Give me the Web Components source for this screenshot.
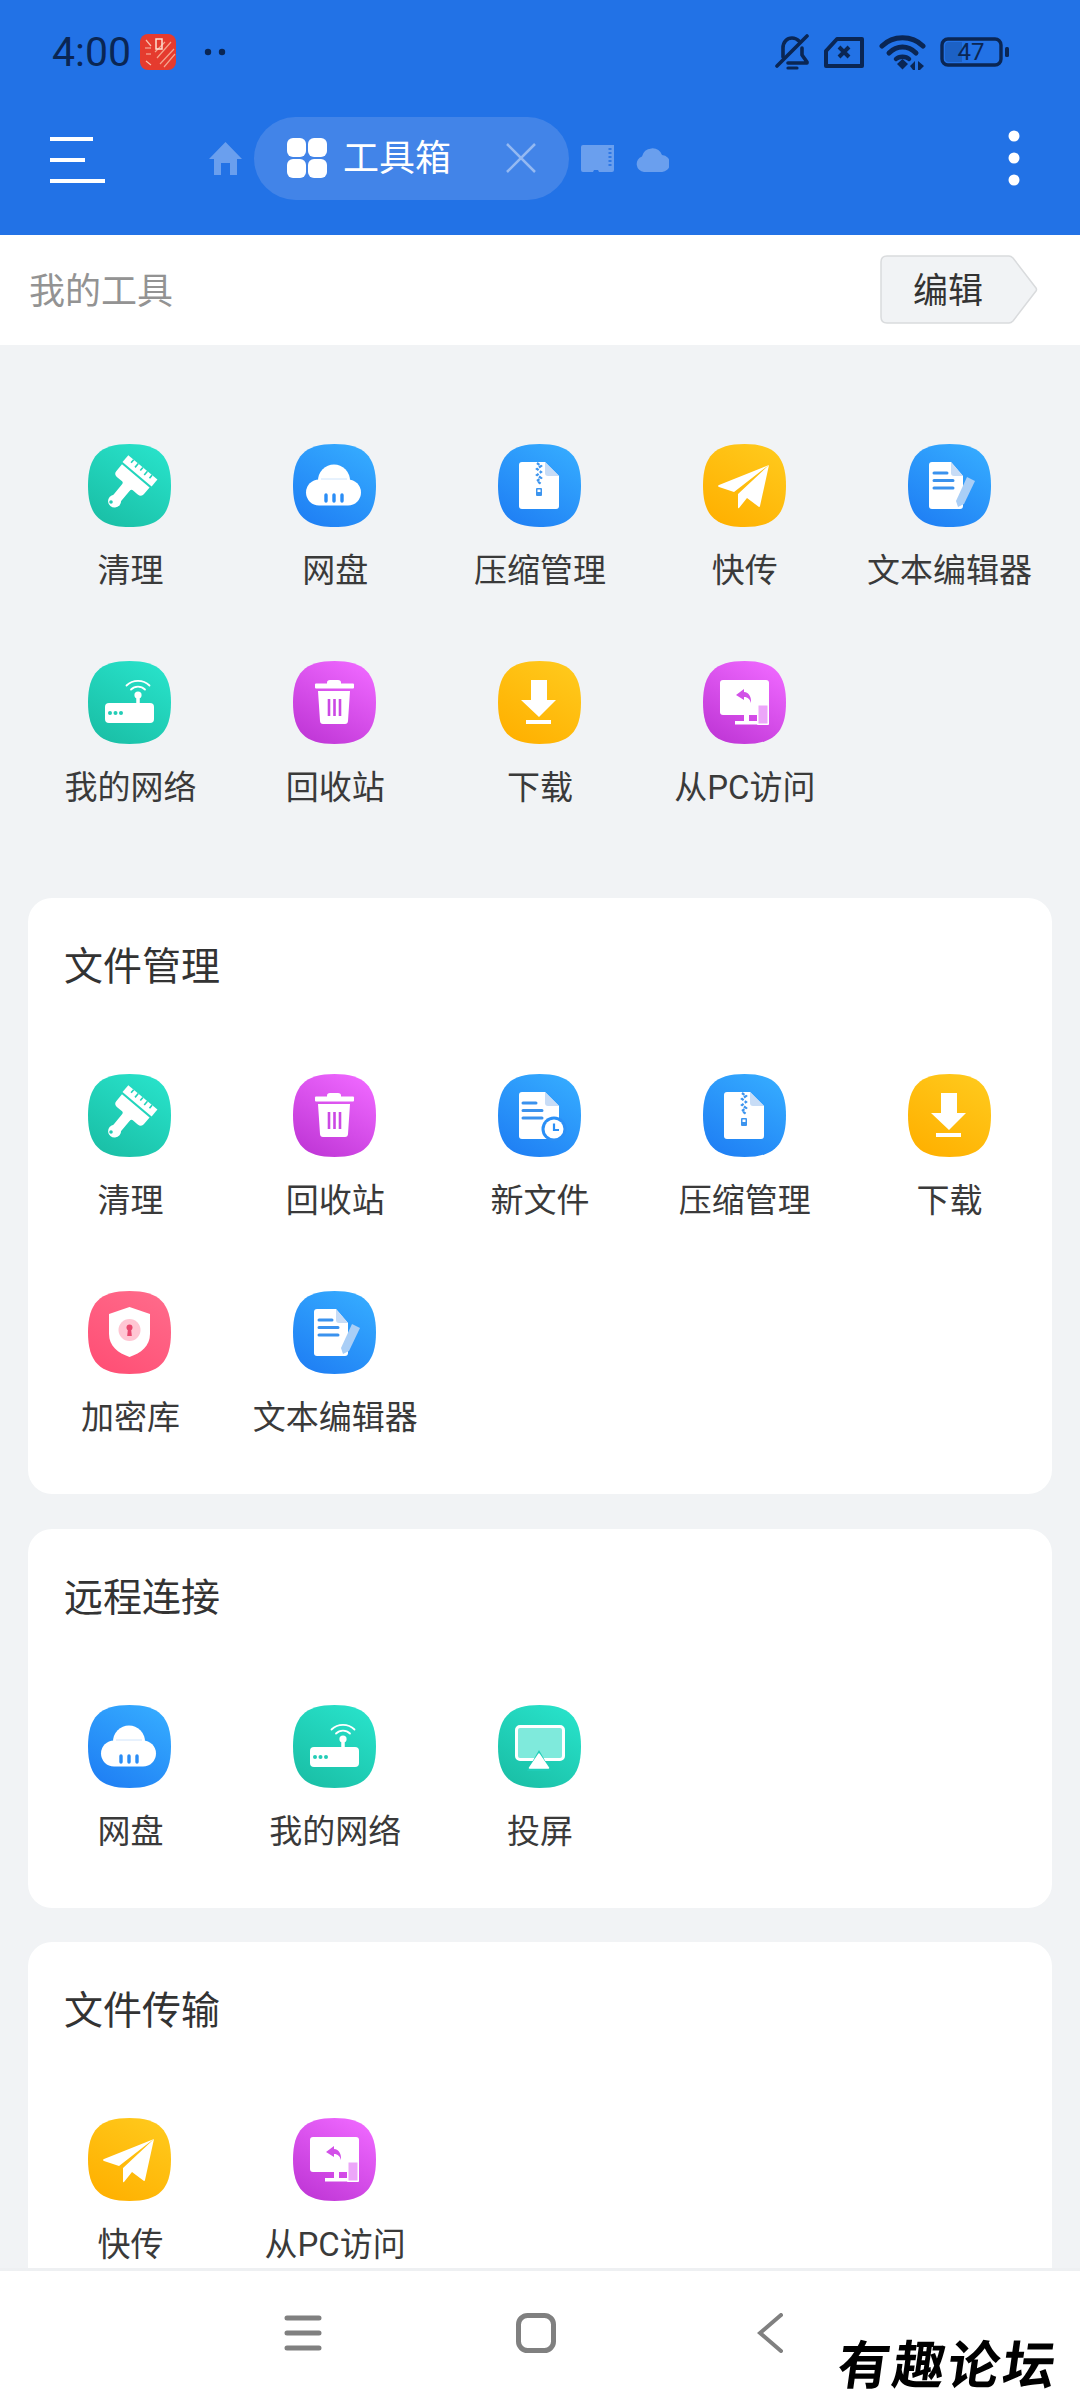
<!DOCTYPE html>
<html lang="zh">
<head>
<meta charset="utf-8">
<title>工具箱</title>
<style>
    html, body {
        margin: 0;
        background: #f1f3f5;
        font-family: Roboto, "Noto Sans CJK SC", sans-serif;
    }
    #app {
        display: flex;
        flex-direction: column;
        width: 1080px;
        height: 2400px;
        overflow: hidden;
    }
</style>
</head>
<body>
<div id="app">
    <app-header></app-header>
    <edit-bar>我的工具</edit-bar>
    <tool-page>
        <tool-grid class="top">
            <tool-item icon="brush">清理</tool-item>
            <tool-item icon="cloud">网盘</tool-item>
            <tool-item icon="zip">压缩管理</tool-item>
            <tool-item icon="plane">快传</tool-item>
            <tool-item icon="text">文本编辑器</tool-item>
            <tool-item icon="router">我的网络</tool-item>
            <tool-item icon="trash">回收站</tool-item>
            <tool-item icon="down">下载</tool-item>
            <tool-item icon="pc">从PC访问</tool-item>
        </tool-grid>
        <tool-card heading="文件管理">
            <tool-item icon="brush">清理</tool-item>
            <tool-item icon="trash">回收站</tool-item>
            <tool-item icon="recent">新文件</tool-item>
            <tool-item icon="zip">压缩管理</tool-item>
            <tool-item icon="down">下载</tool-item>
            <tool-item icon="vault">加密库</tool-item>
            <tool-item icon="text">文本编辑器</tool-item>
        </tool-card>
        <tool-card heading="远程连接" style="margin-top: 1px">
            <tool-item icon="cloud">网盘</tool-item>
            <tool-item icon="router">我的网络</tool-item>
            <tool-item icon="cast">投屏</tool-item>
        </tool-card>
        <tool-card heading="文件传输">
            <tool-item icon="plane">快传</tool-item>
            <tool-item icon="pc">从PC访问</tool-item>
        </tool-card>
    </tool-page>
    <nav-bar></nav-bar>
</div>

<script>
const COLORS = {
    teal: ['#1abfa6', '#28e2ca'],
    blue: ['#1f7ff4', '#35abff'],
    yellow: ['#ffb000', '#ffc91c'],
    purple: ['#bf36d6', '#ef68ff'],
    pink: ['#ff4f75', '#ff6a8a']
};

const paper = `<path d="M24 18H47L61 32V62a3 3 0 0 1-3 3H24a3 3 0 0 1-3-3V21a3 3 0 0 1 3-3Z" fill="#fff"/>
    <path d="M47 18L61 32H50a3 3 0 0 1-3-3Z" fill="#c7dcf6"/>`;

const ICONS = {
    brush: { color: 'teal', art: `
        <g transform="translate(51 28) rotate(40)" fill="#fff">
            <path d="M-19-6H19V3H-19Z"/>
            <path d="M-18 5H18V14Q18 18 13 18H7Q5 18 5 21V37H-5V21Q-5 18-7 18H-13Q-18 18-18 14Z"/>
            <circle cy="38" r="6.5"/>
            <path d="M-12-6V-2M-6-6V-1M0-6V-2M6-6V-1M12-6V-2" stroke="#22d2ba" stroke-width="1.6"/>
        </g>
        <circle cx="23" cy="58" r="1.8" fill="#22cbb3"/>` },
    cloud: { color: 'blue', art: `
        <ellipse cx="41" cy="37" rx="16" ry="16.500" fill="#fff"/>
        <rect x="13" y="35.500" width="55" height="26" rx="13" fill="#fff"/>
        <path d="M28 35H54" stroke="#cfe4fb" stroke-width="1"/>
        <path d="M33 51v6M41 51v6M49 51v6" stroke="#2a8df6" stroke-width="3.400" stroke-linecap="round"/>` },
    zip: { color: 'blue', art: `${paper}
        <path d="M39 19l4 3-4 3 4 3-4 3 4 3-4 3 4 3" fill="none" stroke="#3c94ee" stroke-width="2.200" stroke-dasharray="3 1.500"/>
        <rect x="38" y="44" width="6" height="8" rx="1" fill="#3c94ee"/>
        <rect x="39.500" y="45.500" width="3" height="2.500" fill="#fff"/>` },
    plane: { color: 'yellow', art: `
        <path d="M66 21L16 41Q14 42 16 43L31 48L58 27Z" fill="#fff"/>
        <path d="M66 21L35 50V63Q35 65 36 64L44 54L56 63Q57 63 57 62Z" fill="#fff"/>` },
    text: { color: 'blue', art: `
        <path d="M24 18H43L55 32V62a3 3 0 0 1-3 3H24a3 3 0 0 1-3-3V21a3 3 0 0 1 3-3Z" fill="#fff"/>
        <path d="M43 18L55 32H46a3 3 0 0 1-3-3Z" fill="#c7dcf6"/>
        <path d="M26 29H39M26 36.500H45M26 44H45" stroke="#3a92ee" stroke-width="3" stroke-linecap="round"/>
        <path d="M59 33L67 37L56 60L50 63L48 57Z" fill="#a9cef6"/>` },
    recent: { color: 'blue', art: `${paper}
        <path d="M25 29H38M25 36.500H44M25 44H44" stroke="#3a92ee" stroke-width="3" stroke-linecap="round"/>
        <circle cx="56" cy="55" r="12.500" fill="#2a8ff6"/>
        <circle cx="56" cy="55" r="9.500" fill="#fff"/>
        <path d="M56 49.500V56H61" fill="none" stroke="#2a8ff6" stroke-width="2.200"/>` },
    router: { color: 'teal', art: `
        <rect x="17" y="42" width="49" height="20" rx="4" fill="#fff"/>
        <path d="M50 43V35" stroke="#fff" stroke-width="3.500"/>
        <circle cx="50" cy="34" r="3.600" fill="#fff"/>
        <path d="M43 28.500A10 10 0 0 1 57 28.500M38.500 24.500A16.500 16.500 0 0 1 61.500 24.500" fill="none" stroke="#fff" stroke-width="1.800" stroke-linecap="round"/>
        <g fill="#22cdb6"><circle cx="22" cy="52" r="2"/><circle cx="27.500" cy="52" r="2"/><circle cx="33" cy="52" r="2"/></g>` },
    trash: { color: 'purple', art: `
        <path d="M34 24V21.500Q34 19 37 19H45Q48 19 48 21.500V24Z" fill="#fff"/>
        <rect x="22" y="22.500" width="39" height="5" rx="1" fill="#fff"/>
        <path d="M25 30H57L55 60Q54.800 63 52 63H30Q27.200 63 27 60Z" fill="#fff"/>
        <path d="M36 38V55M41.500 38V55M47 38V55" stroke="#cb48e4" stroke-width="2.600"/>` },
    down: { color: 'yellow', art: `
        <path d="M33 19H49V39H58L41 56L23 39H33Z" fill="#fff"/>
        <rect x="28" y="59" width="25" height="4" fill="#fff"/>` },
    pc: { color: 'purple', art: `
        <rect x="17" y="19" width="49" height="35" rx="3" fill="#fff"/>
        <rect x="41" y="52" width="5" height="9" fill="#fff"/>
        <rect x="32" y="60" width="23" height="3.500" fill="#fff"/>
        <path d="M41 28L33 34L41 39V36C45 36 47 38.500 48 42C48.500 36 46 31.500 41 31Z" fill="#d250e8"/>
        <rect x="54" y="43" width="12" height="21" rx="1" fill="#fff"/>
        <rect x="55.500" y="44.500" width="9" height="18" fill="#eca6f9"/>` },
    vault: { color: 'pink', art: `
        <path d="M41.500 16L62 23V43C62 55 53 62 41.500 66C30 62 21 55 21 43V23Z" fill="#fff"/>
        <circle cx="41.500" cy="39" r="11" fill="#ffc6d3"/>
        <circle cx="41.500" cy="36.500" r="3" fill="#e8476d"/>
        <path d="M40 37H43L43.800 45H39.200Z" fill="#e8476d"/>` },
    cast: { color: 'teal', art: `
        <rect x="18.500" y="21.500" width="47" height="33" rx="3.500" fill="#7feadc" stroke="#fff" stroke-width="3"/>
        <path d="M41 45L53 66H29Z" fill="#20cdb8"/>
        <path d="M41 49L50.500 63H31.500Z" fill="#fff" stroke="#fff" stroke-width="1.500" stroke-linejoin="round"/>` }
};

class ToolIcon extends HTMLElement {
    connectedCallback() {
        const icon = ICONS[this.getAttribute('name')];
        const [from, to] = COLORS[icon.color];
        this.attachShadow({ mode: 'open' });
        this.shadowRoot.innerHTML = `
            <style>
                :host { display: block; width: 83px; height: 83px; margin-left: -1px; }
                svg { display: block; }
            </style>
            <svg width="83" height="83" viewBox="0 0 83 83">
                <defs>
                    <linearGradient id="bg" x1="0.2" y1="1" x2="0.8" y2="0">
                        <stop offset="0" stop-color="${from}"/>
                        <stop offset="1" stop-color="${to}"/>
                    </linearGradient>
                </defs>
                <path d="M41.500 0C71 0 83 12 83 41.500C83 71 71 83 41.500 83C12 83 0 71 0 41.500C0 12 12 0 41.500 0Z" fill="url(#bg)"/>
                ${icon.art}
            </svg>
        `;
    }
}

class ToolItem extends HTMLElement {
    connectedCallback() {
        this.attachShadow({ mode: 'open' });
        this.shadowRoot.innerHTML = `
            <style>
                :host {
                    display: flex;
                    flex-direction: column;
                    align-items: center;
                    padding-top: 24px;
                    box-sizing: border-box;
                    height: 217px;
                    color: #3a3a3a;
                    font-size: 33px;
                }
                .label {
                    margin-top: 22px;
                    line-height: 44px;
                    white-space: nowrap;
                }
            </style>
            <tool-icon name="${this.getAttribute('icon')}"></tool-icon>
            <div class="label"><slot></slot></div>
        `;
    }
}

class ToolGrid extends HTMLElement {
    constructor() {
        super();
        this.attachShadow({ mode: 'open' });
        this.shadowRoot.innerHTML = `
            <style>
                :host {
                    display: grid;
                    grid-template-columns: repeat(5, 1fr);
                    grid-auto-rows: 217px;
                }
            </style>
            <slot></slot>
        `;
    }
}

class ToolCard extends HTMLElement {
    connectedCallback() {
        this.attachShadow({ mode: 'open' });
        this.shadowRoot.innerHTML = `
            <style>
                :host {
                    display: block;
                    background: #fff;
                    border-radius: 24px;
                    padding-bottom: 10px;
                    flex: none;
                }
                .title {
                    height: 138px;
                    line-height: 138px;
                    padding-left: 36px;
                    margin-bottom: 14px;
                    font-size: 39px;
                    color: #333;
                }
            </style>
            <div class="title">${this.getAttribute('heading')}</div>
            <tool-grid><slot></slot></tool-grid>
        `;
    }
}

class ToolPage extends HTMLElement {
    constructor() {
        super();
        this.attachShadow({ mode: 'open' });
        this.shadowRoot.innerHTML = `
            <style>
                :host {
                    display: flex;
                    flex-direction: column;
                    gap: 34px;
                    flex: 1;
                    min-height: 0;
                    overflow: hidden;
                    padding: 75px 28px 0;
                }
                ::slotted(.top) { margin-bottom: 10px; flex: none; }
            </style>
            <slot></slot>
        `;
    }
}

class EditBar extends HTMLElement {
    constructor() {
        super();
        this.attachShadow({ mode: 'open' });
        this.shadowRoot.innerHTML = `
            <style>
                :host {
                    display: flex;
                    align-items: center;
                    justify-content: space-between;
                    flex: none;
                    height: 110px;
                    padding: 0 42px 0 29px;
                    background: #fff;
                    color: #939393;
                    font-size: 36px;
                }
                .name { margin-top: -5px; }
                .btn {
                    position: relative;
                    width: 158px;
                    height: 69px;
                    margin-top: -1px;
                    box-sizing: border-box;
                    padding-left: 33px;
                    line-height: 74px;
                    color: #333;
                    font-size: 35px;
                }
                .btn svg { position: absolute; left: 0; top: 0; }
                .btn span { position: relative; }
            </style>
            <div class="name"><slot></slot></div>
            <div class="btn">
                <svg width="158" height="69" viewBox="0 0 158 69">
                    <path d="M7 1H129Q131 1 133 3L156 33Q157 34.500 156 36L133 66Q131 68 129 68H7Q1 68 1 62V7Q1 1 7 1Z" fill="#f1f3f5" stroke="#d9dbdd" stroke-width="1.500"/>
                </svg>
                <span>编辑</span>
            </div>
        `;
    }
}

class StatusBar extends HTMLElement {
    constructor() {
        super();
        this.attachShadow({ mode: 'open' });
        this.shadowRoot.innerHTML = `
            <style>
                :host {
                    display: flex;
                    align-items: center;
                    height: 104px;
                    padding: 0 71px 0 52px;
                    color: #0a2654;
                }
                .time { font-size: 41px; line-height: 1; }
                .red { margin-left: 9px; }
                .dots { margin-left: 28px; }
                .right { display: flex; align-items: center; margin-left: auto; }
                .battery {
                    position: relative;
                    width: 69px;
                    height: 30px;
                    margin-left: 14px;
                }
                .battery svg { position: absolute; left: 0; top: 0; }
                .battery span {
                    position: absolute;
                    left: 16px;
                    top: 2px;
                    width: 30px;
                    text-align: center;
                    font-size: 24px;
                    line-height: 27px;
                }
                svg { display: block; }
            </style>
            <span class="time">4:00</span>
            <svg class="red" width="36" height="36" viewBox="0 0 36 36">
                <rect width="36" height="36" rx="8" fill="#e53b2e"/>
                <path d="M20 30L34 15M24 33L35 20M17 24L31 8M15 18L25 8" stroke="#f4a58e" stroke-width="1.200"/>
                <rect x="16" y="5" width="6" height="10" fill="none" stroke="#fde0d0" stroke-width="1.500"/>
                <path d="M6 6L11 12M5 14H11M6 20H11M6 27L11 31" stroke="#f8c0ae" stroke-width="1.200"/>
            </svg>
            <svg class="dots" width="22" height="8" viewBox="0 0 22 8">
                <circle cx="4" cy="4" r="3.200" fill="#0a2654"/>
                <circle cx="18" cy="4" r="3.200" fill="#0a2654"/>
            </svg>
            <div class="right">
                <svg width="34" height="37" viewBox="0 0 34 37" fill="none" stroke="#0a2654" stroke-width="3.600" stroke-linecap="round" stroke-linejoin="round">
                    <path d="M2 32L32 2"/>
                    <path d="M8 23V14C8 8 12 4 17 4C20 4 22 5 24 7"/>
                    <path d="M27 14V21L32 28V29H13"/>
                    <path d="M13 34H22" stroke-width="3.200"/>
                </svg>
                <svg style="margin-left:15px" width="40" height="31" viewBox="0 0 40 31" fill="none" stroke="#0a2654" stroke-width="4" stroke-linejoin="round">
                    <path d="M13 2H38V29H2V14Z"/>
                    <path d="M15 10L25 20M25 10L15 20" stroke-width="4"/>
                </svg>
                <svg style="margin-left:15px" width="47" height="35" viewBox="0 0 47 35" fill="none" stroke="#0a2654" stroke-linecap="round">
                    <path d="M3 11C14 0 33 0 44 11" stroke-width="5"/>
                    <path d="M10 18C18 10 29 10 37 18" stroke-width="5"/>
                    <path d="M17 24C20 21 27 21 30 24" stroke-width="4.500"/>
                    <path d="M18 29L23.500 24L29 29L23.500 34.500Z" fill="#0a2654" stroke="none"/>
                    <path d="M36 26V35H34L31 31ZM39 26V35H41L45 31Z" fill="#0a2654" stroke="none"/>
                </svg>
                <div class="battery">
                    <svg width="69" height="30" viewBox="0 0 69 30">
                        <rect x="2" y="2" width="59" height="26" rx="6" fill="none" stroke="#0a2654" stroke-width="3.400"/>
                        <path d="M9 5H22V25H9Q5 25 5 21V9Q5 5 9 5Z" fill="#0a2654" opacity=".22"/>
                        <rect x="65" y="10" width="4" height="10" rx="1.500" fill="#0a2654"/>
                    </svg>
                    <span>47</span>
                </div>
            </div>
        `;
    }
}

class ToolTab extends HTMLElement {
    constructor() {
        super();
        this.attachShadow({ mode: 'open' });
        this.shadowRoot.innerHTML = `
            <style>
                :host {
                    display: flex;
                    align-items: center;
                    box-sizing: border-box;
                    width: 315px;
                    height: 83px;
                    padding-left: 33px;
                    border-radius: 42px;
                    background: #4284e8;
                    color: #fff;
                    font-size: 36px;
                }
                span { margin-left: 16px; margin-top: -6px; }
                .close { margin-left: 54px; }
                svg { display: block; }
            </style>
            <svg width="40" height="40" viewBox="0 0 40 40" fill="#fff">
                <rect width="19" height="19" rx="6"/>
                <rect x="21" width="19" height="19" rx="6"/>
                <rect y="21" width="19" height="19" rx="6"/>
                <rect x="21" y="21" width="19" height="19" rx="6"/>
            </svg>
            <span>工具箱</span>
            <svg class="close" width="32" height="32" viewBox="0 0 32 32" stroke="#94b9f2" stroke-width="2.500">
                <path d="M2 2L30 30M30 2L2 30"/>
            </svg>
        `;
    }
}

class AppHeader extends HTMLElement {
    constructor() {
        super();
        this.attachShadow({ mode: 'open' });
        this.shadowRoot.innerHTML = `
            <style>
                :host {
                    display: block;
                    flex: none;
                    height: 235px;
                    background: #2272e6;
                }
                .row {
                    display: flex;
                    align-items: center;
                    height: 108px;
                    padding: 0 60px 0 50px;
                }
                svg { display: block; }
                .menu { margin-top: 4px; }
                .home { margin-left: 104px; margin-right: 12px; }
                .sd { margin-left: 12px; }
                .pcloud { margin-left: 22px; }
                .more { margin-left: auto; }
            </style>
            <status-bar></status-bar>
            <div class="row">
                <svg class="menu" width="55" height="46" viewBox="0 0 55 46" fill="#fff">
                    <rect y="0" width="43" height="4"/>
                    <rect y="21" width="35" height="4"/>
                    <rect y="42" width="55" height="4"/>
                </svg>
                <svg class="home" width="33" height="33" viewBox="0 0 33 33" fill="#6a9fee">
                    <path d="M16.500 0L33 17H28V33H21V21H12V33H5V17H0Z"/>
                </svg>
                <tool-tab></tool-tab>
                <svg class="sd" width="33" height="27" viewBox="0 0 33 27" fill="#6a9fee">
                    <path d="M2 0H33V25Q33 27 31 27H18L17 25H13L12 27H2Q0 27 0 25V2Q0 0 2 0Z"/>
                    <path d="M29 3V21" stroke="#2f79e6" stroke-width="3" stroke-dasharray="2 2"/>
                </svg>
                <svg class="pcloud" width="33" height="27" viewBox="0 0 33 27" fill="#6a9fee">
                    <path d="M8 27A8 8 0 0 1 6 11.500A10.500 10.500 0 0 1 26 10A8.500 8.500 0 0 1 25 27Z"/>
                </svg>
                <svg class="more" width="12" height="56" viewBox="0 0 12 56" fill="#fff">
                    <circle cx="6" cy="6" r="5.500"/>
                    <circle cx="6" cy="28" r="5.500"/>
                    <circle cx="6" cy="50" r="5.500"/>
                </svg>
            </div>
        `;
    }
}

class NavBar extends HTMLElement {
    constructor() {
        super();
        this.attachShadow({ mode: 'open' });
        this.shadowRoot.innerHTML = `
            <style>
                :host {
                    position: relative;
                    display: flex;
                    align-items: center;
                    flex: none;
                    box-sizing: border-box;
                    height: 132px;
                    padding: 0 0 6px 186px;
                    background: #fff;
                    border-top: 3px solid #eef0f2;
                }
                .cell { display: flex; justify-content: center; width: 233.500px; }
                svg { display: block; }
                .mark {
                    position: absolute;
                    left: 838px;
                    top: 66px;
                    font-family: "Liberation Sans", "Noto Sans CJK SC", sans-serif;
                    font-size: 52px;
                    font-weight: 700;
                    letter-spacing: 3px;
                    line-height: 58px;
                    color: #000;
                    white-space: nowrap;
                    transform: skewX(-8deg);
                }
            </style>
            <div class="cell">
                <svg width="38" height="36" viewBox="0 0 38 36" stroke="#808080" stroke-width="5" stroke-linecap="round">
                    <path d="M3 3H35M3 18H35M3 33H35"/>
                </svg>
            </div>
            <div class="cell">
                <svg width="40" height="40" viewBox="0 0 40 40" fill="none" stroke="#808080" stroke-width="5">
                    <rect x="2.500" y="2.500" width="35" height="35" rx="9"/>
                </svg>
            </div>
            <div class="cell">
                <svg width="26" height="40" viewBox="0 0 26 40" fill="none" stroke="#808080" stroke-width="4" stroke-linecap="round">
                    <path d="M24 2L3 20L24 38"/>
                </svg>
            </div>
            <div class="mark">有趣论坛</div>
        `;
    }
}

customElements.define('tool-icon', ToolIcon);
customElements.define('tool-item', ToolItem);
customElements.define('tool-grid', ToolGrid);
customElements.define('tool-card', ToolCard);
customElements.define('tool-page', ToolPage);
customElements.define('edit-bar', EditBar);
customElements.define('status-bar', StatusBar);
customElements.define('tool-tab', ToolTab);
customElements.define('app-header', AppHeader);
customElements.define('nav-bar', NavBar);
</script>
</body>
</html>
